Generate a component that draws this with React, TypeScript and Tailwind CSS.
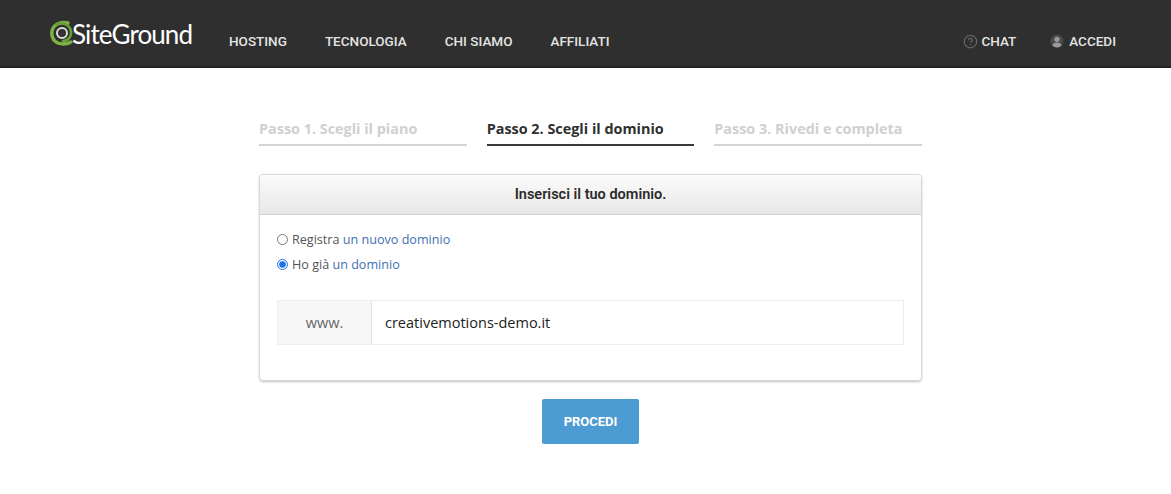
import { CircleHelp } from 'lucide-react';

const navItems = ['HOSTING', 'TECNOLOGIA', 'CHI SIAMO', 'AFFILIATI'];

const steps = [
  { label: 'Passo 1. Scegli il piano', active: false },
  { label: 'Passo 2. Scegli il dominio', active: true },
  { label: 'Passo 3. Rivedi e completa', active: false },
];

const Logo = () => (
  <div className="flex items-center">
    <svg width="23" height="28" viewBox="0 0 23 28" fill="none" className="shrink-0">
      <path d="M18 3C10 1 2 5 1.8 13c-.2 7 5 11 11 11 3 0 6-.6 8-2" stroke="#7cb342" strokeWidth="3.4" strokeLinecap="round" />
      <path d="M6 4.5c7-3 14 .5 15 7 .6 5-3 9.500-8 9.500" stroke="#689f38" strokeWidth="2.600" strokeLinecap="round" />
      <circle cx="12" cy="13" r="5" stroke="#d9e2d0" strokeWidth="2" />
      <circle cx="12" cy="13" r="2.600" fill="#3d3145" />
    </svg>
    <span className="-ml-[1px] font-['Lato',sans-serif] text-[26px] leading-none font-normal tracking-[-0.9px] text-white">
      SiteGround
    </span>
  </div>
);

const UserIcon = () => (
  <svg width="14" height="14" viewBox="0 0 14 14" className="shrink-0">
    <circle cx="7" cy="7" r="6.500" fill="#4a4a4a" />
    <circle cx="7" cy="5.300" r="2.600" fill="#9a9a9a" />
    <path d="M2.300 11.500C3 9.300 5 8.500 7 8.500s4 .8 4.700 3A6.500 6.500 0 0 1 2.300 11.500z" fill="#9a9a9a" />
  </svg>
);

const Header = () => (
  <header className="flex h-[68px] items-center border-b-2 border-[#222222] bg-[#2f2f2f] pl-[50px] pr-[55px] font-['Roboto',sans-serif] text-[13.5px] font-medium text-[#e4e4e4]">
    <div className="mb-[-1px] w-[179px]">
      <Logo />
    </div>
    <nav className="flex gap-[38px] pt-[16px]">
      {navItems.map((item) => (
        <span key={item}>{item}</span>
      ))}
    </nav>
    <div className="ml-auto flex gap-[34px] pt-[16px]">
      <span className="flex items-center gap-[3px]">
        <CircleHelp className="h-[15px] w-[15px] text-[#666666]" />
        CHAT
      </span>
      <span className="flex items-center gap-[5px]">
        <UserIcon />
        ACCEDI
      </span>
    </div>
  </header>
);

const Steps = () => (
  <div className="grid grid-cols-3 gap-[20px] font-['Open_Sans',sans-serif] text-[14.4px] leading-[21px] font-bold">
    {steps.map((step) => (
      <div
        key={step.label}
        className={
          step.active
            ? 'border-b-2 border-[#3a3a3a] pb-[5px] text-[#2f2f2f]'
            : 'border-b-2 border-[#d4d4d4] pb-[5px] text-[#d0d0d0]'
        }
      >
        {step.label}
      </div>
    ))}
  </div>
);

const DomainOption = ({ label, link, checked }: { label: string; link: string; checked?: boolean }) => (
  <label className="flex h-[25px] items-center gap-[4px] text-[12.6px] text-[#555555]">
    <input type="radio" name="domain" defaultChecked={checked} className="m-0 h-[11px] w-[11px] accent-[#1a73e8]" />
    <span className="pt-[1px]">
      {label} <span className="text-[#3f6fb0]">{link}</span>
    </span>
  </label>
);

export default function App() {
  return (
    <div className="min-h-[494px] bg-white">
      <Header />
      <main className="ml-[259px] w-[663px] pt-[50px] font-['Open_Sans',sans-serif]">
        <Steps />
        <section className="mt-[28px] h-[207px] rounded-[4px] border border-[#d8d8d8] shadow-[0_1px_2px_rgba(0,0,0,0.25)]">
          <h2 className="flex h-[40px] items-center justify-center rounded-t-[4px] border-b border-[#cfcfcf] bg-gradient-to-b from-[#fbfbfb] to-[#e8e8e8] font-['Roboto',sans-serif] text-[14.5px] font-semibold text-[#2b2b2b]">
            Inserisci il tuo dominio.
          </h2>
          <div className="px-[17px] pt-[12px]">
            <DomainOption label="Registra" link="un nuovo dominio" />
            <DomainOption label="Ho già" link="un dominio" checked />
            <div className="mt-[23px] flex h-[45px] border border-[#eeeeee]">
              <div className="flex w-[94px] items-center justify-center border-r border-[#e6e6e6] bg-[#f7f7f7] text-[14.5px] text-[#666666]">
                www.
              </div>
              <div className="flex flex-1 items-center pl-[13px] text-[14.5px] text-[#222222]">
                creativemotions-demo.it
              </div>
            </div>
          </div>
        </section>
        <div className="mt-[18px] flex justify-center">
          <button className="h-[45px] w-[97px] rounded-[2px] bg-[#4c9bd2] font-['Roboto',sans-serif] text-[13px] font-bold text-white">
            PROCEDI
          </button>
        </div>
      </main>
    </div>
  );
}
